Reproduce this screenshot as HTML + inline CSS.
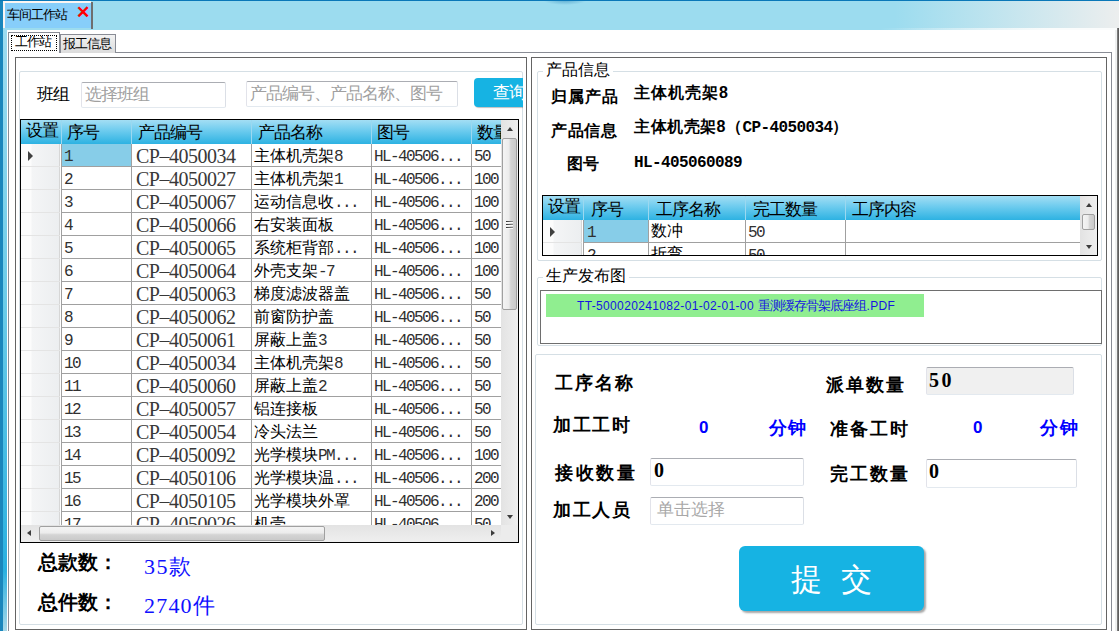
<!DOCTYPE html><html><head><meta charset="utf-8"><style>
*{margin:0;padding:0;box-sizing:border-box}
html,body{width:1119px;height:631px;overflow:hidden;background:#fff;font-family:"Liberation Sans",sans-serif;color:#000}
.ab{position:absolute}
.t{position:absolute;white-space:nowrap;line-height:1}
.a{font-family:"Liberation Mono",monospace;letter-spacing:-1.6px;color:#303030}
.hdr{background:linear-gradient(#a3def4 0%,#6ccbee 45%,#2db2e2 100%)}
.vl{position:absolute;width:1px;background:#a0a0a0}
.hl{position:absolute;height:1px;background:#a0a0a0}
.rh{position:absolute;background:linear-gradient(to right,#fcfcfc 0,#fcfcfc 10px,#f4f5f6 11px,#eceef0 100%);border-right:1px solid #d6d6d6}
.sb{position:absolute;background:#e8e8e8}
.thumbv{position:absolute;border:1px solid #a0a0a0;border-radius:2px;background:linear-gradient(to right,#f4f4f4 0%,#ececec 45%,#d4d4d4 60%,#cacaca 100%)}
.thumbh{position:absolute;border:1px solid #a0a0a0;border-radius:2px;background:linear-gradient(#f4f4f4 0%,#ececec 45%,#d4d4d4 60%,#cacaca 100%)}
.gb{position:absolute;border:1px solid #d5dfe5;border-radius:2px}
.frame{position:absolute;border:1px solid #646464}
.inp{position:absolute;border:1px solid;border-color:#abadb3 #dbdfe6 #e3e9ef #e2e3ea;border-radius:2px;background:#fff}
.b{font-weight:bold}
</style></head><body>
<div class="ab" style="left:0;top:0;width:1119px;height:30px;background:linear-gradient(to right,#9cdcef 0,#9cdcef 895px,#eceeee 1119px)"></div>
<div class="ab" style="left:540px;top:0;width:50px;height:7px;background:radial-gradient(ellipse 22px 5px at 25px 0,rgba(10,110,170,0.45),rgba(10,110,170,0) 100%)"></div>
<div class="ab" style="left:0;top:0;width:1119px;height:1px;background:#0a78b8"></div>
<div class="ab" style="left:3px;top:1px;width:88px;height:27px;background:#fbf5f2"></div>
<div class="ab" style="left:5px;top:3px;width:86px;height:25px;background:#87cefa"></div>
<div class="ab" style="left:91px;top:2px;width:2px;height:27px;background:#6e6e6e"></div>
<div class="t" style="left:7px;top:8px;font-size:13px;letter-spacing:-1px">车间工作站</div>
<div class="t" style="left:76px;top:4px;font-size:17px;color:#f00;font-weight:bold">✕</div>
<div class="ab" style="left:0;top:1px;width:3px;height:630px;background:#1a86bc"></div>
<div class="ab" style="left:3px;top:29px;width:4px;height:602px;background:linear-gradient(#9ddcf0 0%,#6ccce9 45%,#2ab0e0 90%,#a8d8e8 100%)"></div>
<div class="ab" style="left:1115px;top:30px;width:2px;height:601px;background:#eef0f0"></div>
<div class="ab" style="left:0;top:28px;width:1119px;height:2px;background:linear-gradient(to right,rgba(255,255,255,0) 0,rgba(255,255,255,0) 880px,rgba(250,252,252,1) 1050px)"></div>
<div class="ab" style="left:1117px;top:28px;width:2px;height:603px;background:linear-gradient(to right,#8a8a8a,#505050)"></div>
<div class="ab" style="left:8px;top:52px;width:1104px;height:600px;border:1px solid #898c95;background:#fff"></div>
<div class="ab" style="left:8px;top:32px;width:52px;height:21px;border:1px solid #898c95;border-bottom:none;background:#fff"></div>
<div class="ab" style="left:11px;top:35px;width:46px;height:16px;border:1px dotted #000"></div>
<div class="t" style="left:15px;top:35px;font-size:13px;letter-spacing:-1px">工作站</div>
<div class="ab" style="left:60px;top:34px;width:56px;height:19px;border:1px solid #898c95;border-bottom:none;background:linear-gradient(#f2f2f2,#dcdcdc)"></div>
<div class="t" style="left:63px;top:37px;font-size:13px;letter-spacing:-1px">报工信息</div>
<div class="frame" style="left:15px;top:57px;width:512px;height:573px"></div>
<div class="frame" style="left:531px;top:57px;width:576px;height:573px"></div>
<div class="gb" style="left:19px;top:71px;width:504px;height:554px"></div>
<div class="t" style="left:37px;top:86px;font-size:17px;letter-spacing:-1px">班组</div>
<div class="inp" style="left:81px;top:82px;width:145px;height:26px"></div>
<div class="t" style="left:85px;top:86px;font-size:17px;letter-spacing:-1px;color:#a0a0a0">选择班组</div>
<div class="inp" style="left:246px;top:81px;width:212px;height:26px"></div>
<div class="t" style="left:250px;top:85px;font-size:17px;letter-spacing:-1px;color:#a0a0a0">产品编号、产品名称、图号</div>
<div class="ab" style="left:474px;top:78px;width:49px;height:31px;overflow:hidden"><div class="ab" style="left:0;top:0;width:80px;height:29px;background:#16b3e3;border-radius:4px;box-shadow:1px 1px 1px rgba(0,0,0,0.25)"></div><div class="t" style="left:19px;top:6px;font-size:17px;letter-spacing:-1px;color:#fff">查询</div></div>
<div class="ab" style="left:20px;top:119px;width:499px;height:424px;border:1px solid #000;background:#fff;overflow:hidden">
<div class="ab hdr" style="left:0;top:0;width:480px;height:24px"></div>
<div class="ab" style="left:40px;top:0;width:1px;height:24px;background:#9bd8f0"></div>
<div class="ab" style="left:110px;top:0;width:1px;height:24px;background:#9bd8f0"></div>
<div class="ab" style="left:230px;top:0;width:1px;height:24px;background:#9bd8f0"></div>
<div class="ab" style="left:350px;top:0;width:1px;height:24px;background:#9bd8f0"></div>
<div class="ab" style="left:450px;top:0;width:1px;height:24px;background:#9bd8f0"></div>
<div class="t" style="left:5px;top:2px;font-size:17px;letter-spacing:-1px">设置</div>
<div class="t" style="left:46px;top:4px;font-size:17px;letter-spacing:-1px">序号</div>
<div class="t" style="left:117px;top:4px;font-size:17px;letter-spacing:-1px">产品编号</div>
<div class="t" style="left:237px;top:4px;font-size:17px;letter-spacing:-1px">产品名称</div>
<div class="t" style="left:356px;top:4px;font-size:17px;letter-spacing:-1px">图号</div>
<div class="t" style="left:456px;top:4px;font-size:17px;letter-spacing:-1px">数量</div>
<div class="rh" style="left:0;top:24px;width:39px;height:22px"></div>
<div class="ab" style="left:41px;top:24px;width:69px;height:22px;background:#87cde8"></div>
<div class="ab" style="left:7px;top:31px;width:0;height:0;border-left:5px solid #404040;border-top:5px solid transparent;border-bottom:5px solid transparent"></div>
<div class="t" style="left:43px;top:28px;font-size:16px"><span class="a">1</span></div>
<div class="t" style="left:115px;top:26px;font-size:20px;letter-spacing:-0.5px;color:#383838;font-family:'Liberation Serif',serif">CP–4050034</div>
<div class="t" style="left:233px;top:28px;font-size:16px">主体机壳架<span class="a">8</span></div>
<div class="t" style="left:353px;top:28px;font-size:16px"><span class="a">HL-40506...</span></div>
<div class="t" style="left:453px;top:28px;font-size:16px"><span class="a">50</span></div>
<div class="hl" style="left:0;top:46px;width:39px;background:#e4e4e4"></div>
<div class="hl" style="left:40px;top:46px;width:440px"></div>
<div class="rh" style="left:0;top:47px;width:39px;height:22px"></div>
<div class="t" style="left:43px;top:51px;font-size:16px"><span class="a">2</span></div>
<div class="t" style="left:115px;top:49px;font-size:20px;letter-spacing:-0.5px;color:#383838;font-family:'Liberation Serif',serif">CP–4050027</div>
<div class="t" style="left:233px;top:51px;font-size:16px">主体机壳架<span class="a">1</span></div>
<div class="t" style="left:353px;top:51px;font-size:16px"><span class="a">HL-40506...</span></div>
<div class="t" style="left:453px;top:51px;font-size:16px"><span class="a">100</span></div>
<div class="hl" style="left:0;top:69px;width:39px;background:#e4e4e4"></div>
<div class="hl" style="left:40px;top:69px;width:440px"></div>
<div class="rh" style="left:0;top:70px;width:39px;height:22px"></div>
<div class="t" style="left:43px;top:74px;font-size:16px"><span class="a">3</span></div>
<div class="t" style="left:115px;top:72px;font-size:20px;letter-spacing:-0.5px;color:#383838;font-family:'Liberation Serif',serif">CP–4050067</div>
<div class="t" style="left:233px;top:74px;font-size:16px">运动信息收<span class="a">...</span></div>
<div class="t" style="left:353px;top:74px;font-size:16px"><span class="a">HL-40506...</span></div>
<div class="t" style="left:453px;top:74px;font-size:16px"><span class="a">100</span></div>
<div class="hl" style="left:0;top:92px;width:39px;background:#e4e4e4"></div>
<div class="hl" style="left:40px;top:92px;width:440px"></div>
<div class="rh" style="left:0;top:93px;width:39px;height:22px"></div>
<div class="t" style="left:43px;top:97px;font-size:16px"><span class="a">4</span></div>
<div class="t" style="left:115px;top:95px;font-size:20px;letter-spacing:-0.5px;color:#383838;font-family:'Liberation Serif',serif">CP–4050066</div>
<div class="t" style="left:233px;top:97px;font-size:16px">右安装面板</div>
<div class="t" style="left:353px;top:97px;font-size:16px"><span class="a">HL-40506...</span></div>
<div class="t" style="left:453px;top:97px;font-size:16px"><span class="a">100</span></div>
<div class="hl" style="left:0;top:115px;width:39px;background:#e4e4e4"></div>
<div class="hl" style="left:40px;top:115px;width:440px"></div>
<div class="rh" style="left:0;top:116px;width:39px;height:22px"></div>
<div class="t" style="left:43px;top:120px;font-size:16px"><span class="a">5</span></div>
<div class="t" style="left:115px;top:118px;font-size:20px;letter-spacing:-0.5px;color:#383838;font-family:'Liberation Serif',serif">CP–4050065</div>
<div class="t" style="left:233px;top:120px;font-size:16px">系统柜背部<span class="a">...</span></div>
<div class="t" style="left:353px;top:120px;font-size:16px"><span class="a">HL-40506...</span></div>
<div class="t" style="left:453px;top:120px;font-size:16px"><span class="a">100</span></div>
<div class="hl" style="left:0;top:138px;width:39px;background:#e4e4e4"></div>
<div class="hl" style="left:40px;top:138px;width:440px"></div>
<div class="rh" style="left:0;top:139px;width:39px;height:22px"></div>
<div class="t" style="left:43px;top:143px;font-size:16px"><span class="a">6</span></div>
<div class="t" style="left:115px;top:141px;font-size:20px;letter-spacing:-0.5px;color:#383838;font-family:'Liberation Serif',serif">CP–4050064</div>
<div class="t" style="left:233px;top:143px;font-size:16px">外壳支架<span class="a">-7</span></div>
<div class="t" style="left:353px;top:143px;font-size:16px"><span class="a">HL-40506...</span></div>
<div class="t" style="left:453px;top:143px;font-size:16px"><span class="a">100</span></div>
<div class="hl" style="left:0;top:161px;width:39px;background:#e4e4e4"></div>
<div class="hl" style="left:40px;top:161px;width:440px"></div>
<div class="rh" style="left:0;top:162px;width:39px;height:22px"></div>
<div class="t" style="left:43px;top:166px;font-size:16px"><span class="a">7</span></div>
<div class="t" style="left:115px;top:164px;font-size:20px;letter-spacing:-0.5px;color:#383838;font-family:'Liberation Serif',serif">CP–4050063</div>
<div class="t" style="left:233px;top:166px;font-size:16px">梯度滤波器盖</div>
<div class="t" style="left:353px;top:166px;font-size:16px"><span class="a">HL-40506...</span></div>
<div class="t" style="left:453px;top:166px;font-size:16px"><span class="a">50</span></div>
<div class="hl" style="left:0;top:184px;width:39px;background:#e4e4e4"></div>
<div class="hl" style="left:40px;top:184px;width:440px"></div>
<div class="rh" style="left:0;top:185px;width:39px;height:22px"></div>
<div class="t" style="left:43px;top:189px;font-size:16px"><span class="a">8</span></div>
<div class="t" style="left:115px;top:187px;font-size:20px;letter-spacing:-0.5px;color:#383838;font-family:'Liberation Serif',serif">CP–4050062</div>
<div class="t" style="left:233px;top:189px;font-size:16px">前窗防护盖</div>
<div class="t" style="left:353px;top:189px;font-size:16px"><span class="a">HL-40506...</span></div>
<div class="t" style="left:453px;top:189px;font-size:16px"><span class="a">50</span></div>
<div class="hl" style="left:0;top:207px;width:39px;background:#e4e4e4"></div>
<div class="hl" style="left:40px;top:207px;width:440px"></div>
<div class="rh" style="left:0;top:208px;width:39px;height:22px"></div>
<div class="t" style="left:43px;top:212px;font-size:16px"><span class="a">9</span></div>
<div class="t" style="left:115px;top:210px;font-size:20px;letter-spacing:-0.5px;color:#383838;font-family:'Liberation Serif',serif">CP–4050061</div>
<div class="t" style="left:233px;top:212px;font-size:16px">屏蔽上盖<span class="a">3</span></div>
<div class="t" style="left:353px;top:212px;font-size:16px"><span class="a">HL-40506...</span></div>
<div class="t" style="left:453px;top:212px;font-size:16px"><span class="a">50</span></div>
<div class="hl" style="left:0;top:230px;width:39px;background:#e4e4e4"></div>
<div class="hl" style="left:40px;top:230px;width:440px"></div>
<div class="rh" style="left:0;top:231px;width:39px;height:22px"></div>
<div class="t" style="left:43px;top:235px;font-size:16px"><span class="a">10</span></div>
<div class="t" style="left:115px;top:233px;font-size:20px;letter-spacing:-0.5px;color:#383838;font-family:'Liberation Serif',serif">CP–4050034</div>
<div class="t" style="left:233px;top:235px;font-size:16px">主体机壳架<span class="a">8</span></div>
<div class="t" style="left:353px;top:235px;font-size:16px"><span class="a">HL-40506...</span></div>
<div class="t" style="left:453px;top:235px;font-size:16px"><span class="a">50</span></div>
<div class="hl" style="left:0;top:253px;width:39px;background:#e4e4e4"></div>
<div class="hl" style="left:40px;top:253px;width:440px"></div>
<div class="rh" style="left:0;top:254px;width:39px;height:22px"></div>
<div class="t" style="left:43px;top:258px;font-size:16px"><span class="a">11</span></div>
<div class="t" style="left:115px;top:256px;font-size:20px;letter-spacing:-0.5px;color:#383838;font-family:'Liberation Serif',serif">CP–4050060</div>
<div class="t" style="left:233px;top:258px;font-size:16px">屏蔽上盖<span class="a">2</span></div>
<div class="t" style="left:353px;top:258px;font-size:16px"><span class="a">HL-40506...</span></div>
<div class="t" style="left:453px;top:258px;font-size:16px"><span class="a">50</span></div>
<div class="hl" style="left:0;top:276px;width:39px;background:#e4e4e4"></div>
<div class="hl" style="left:40px;top:276px;width:440px"></div>
<div class="rh" style="left:0;top:277px;width:39px;height:22px"></div>
<div class="t" style="left:43px;top:281px;font-size:16px"><span class="a">12</span></div>
<div class="t" style="left:115px;top:279px;font-size:20px;letter-spacing:-0.5px;color:#383838;font-family:'Liberation Serif',serif">CP–4050057</div>
<div class="t" style="left:233px;top:281px;font-size:16px">铝连接板</div>
<div class="t" style="left:353px;top:281px;font-size:16px"><span class="a">HL-40506...</span></div>
<div class="t" style="left:453px;top:281px;font-size:16px"><span class="a">50</span></div>
<div class="hl" style="left:0;top:299px;width:39px;background:#e4e4e4"></div>
<div class="hl" style="left:40px;top:299px;width:440px"></div>
<div class="rh" style="left:0;top:300px;width:39px;height:22px"></div>
<div class="t" style="left:43px;top:304px;font-size:16px"><span class="a">13</span></div>
<div class="t" style="left:115px;top:302px;font-size:20px;letter-spacing:-0.5px;color:#383838;font-family:'Liberation Serif',serif">CP–4050054</div>
<div class="t" style="left:233px;top:304px;font-size:16px">冷头法兰</div>
<div class="t" style="left:353px;top:304px;font-size:16px"><span class="a">HL-40506...</span></div>
<div class="t" style="left:453px;top:304px;font-size:16px"><span class="a">50</span></div>
<div class="hl" style="left:0;top:322px;width:39px;background:#e4e4e4"></div>
<div class="hl" style="left:40px;top:322px;width:440px"></div>
<div class="rh" style="left:0;top:323px;width:39px;height:22px"></div>
<div class="t" style="left:43px;top:327px;font-size:16px"><span class="a">14</span></div>
<div class="t" style="left:115px;top:325px;font-size:20px;letter-spacing:-0.5px;color:#383838;font-family:'Liberation Serif',serif">CP–4050092</div>
<div class="t" style="left:233px;top:327px;font-size:16px">光学模块<span class="a">PM...</span></div>
<div class="t" style="left:353px;top:327px;font-size:16px"><span class="a">HL-40506...</span></div>
<div class="t" style="left:453px;top:327px;font-size:16px"><span class="a">100</span></div>
<div class="hl" style="left:0;top:345px;width:39px;background:#e4e4e4"></div>
<div class="hl" style="left:40px;top:345px;width:440px"></div>
<div class="rh" style="left:0;top:346px;width:39px;height:22px"></div>
<div class="t" style="left:43px;top:350px;font-size:16px"><span class="a">15</span></div>
<div class="t" style="left:115px;top:348px;font-size:20px;letter-spacing:-0.5px;color:#383838;font-family:'Liberation Serif',serif">CP–4050106</div>
<div class="t" style="left:233px;top:350px;font-size:16px">光学模块温<span class="a">...</span></div>
<div class="t" style="left:353px;top:350px;font-size:16px"><span class="a">HL-40506...</span></div>
<div class="t" style="left:453px;top:350px;font-size:16px"><span class="a">200</span></div>
<div class="hl" style="left:0;top:368px;width:39px;background:#e4e4e4"></div>
<div class="hl" style="left:40px;top:368px;width:440px"></div>
<div class="rh" style="left:0;top:369px;width:39px;height:22px"></div>
<div class="t" style="left:43px;top:373px;font-size:16px"><span class="a">16</span></div>
<div class="t" style="left:115px;top:371px;font-size:20px;letter-spacing:-0.5px;color:#383838;font-family:'Liberation Serif',serif">CP–4050105</div>
<div class="t" style="left:233px;top:373px;font-size:16px">光学模块外罩</div>
<div class="t" style="left:353px;top:373px;font-size:16px"><span class="a">HL-40506...</span></div>
<div class="t" style="left:453px;top:373px;font-size:16px"><span class="a">200</span></div>
<div class="hl" style="left:0;top:391px;width:39px;background:#e4e4e4"></div>
<div class="hl" style="left:40px;top:391px;width:440px"></div>
<div class="rh" style="left:0;top:392px;width:39px;height:22px"></div>
<div class="t" style="left:43px;top:396px;font-size:16px"><span class="a">17</span></div>
<div class="t" style="left:115px;top:394px;font-size:20px;letter-spacing:-0.5px;color:#383838;font-family:'Liberation Serif',serif">CP–4050026</div>
<div class="t" style="left:233px;top:396px;font-size:16px">机壳</div>
<div class="t" style="left:353px;top:396px;font-size:16px"><span class="a">HL-40506...</span></div>
<div class="t" style="left:453px;top:396px;font-size:16px"><span class="a">50</span></div>
<div class="hl" style="left:0;top:414px;width:39px;background:#e4e4e4"></div>
<div class="hl" style="left:40px;top:414px;width:440px"></div>
<div class="vl" style="left:40px;top:24px;height:400px"></div>
<div class="vl" style="left:110px;top:24px;height:400px"></div>
<div class="vl" style="left:230px;top:24px;height:400px"></div>
<div class="vl" style="left:350px;top:24px;height:400px"></div>
<div class="vl" style="left:450px;top:24px;height:400px"></div>
<div class="sb" style="left:480px;top:0;width:17px;height:405px;background:linear-gradient(to right,#e3e3e3,#efefef)"></div>
<div class="ab" style="left:486px;top:7px;width:0;height:0;border-left:3.5px solid transparent;border-right:3.5px solid transparent;border-bottom:4px solid #3c3c3c"></div>
<div class="thumbv" style="left:481px;top:18px;width:15px;height:172px"></div>
<div class="ab" style="left:485px;top:101px;width:7px;height:1px;background:linear-gradient(to right,#303030,#909090);box-shadow:0 1px 0 #fafafa"></div>
<div class="ab" style="left:485px;top:104px;width:7px;height:1px;background:linear-gradient(to right,#303030,#909090);box-shadow:0 1px 0 #fafafa"></div>
<div class="ab" style="left:485px;top:107px;width:7px;height:1px;background:linear-gradient(to right,#303030,#909090);box-shadow:0 1px 0 #fafafa"></div>
<div class="ab" style="left:486px;top:395px;width:0;height:0;border-left:3.5px solid transparent;border-right:3.5px solid transparent;border-top:4px solid #3c3c3c"></div>
<div class="sb" style="left:0;top:405px;width:480px;height:17px;background:linear-gradient(#e3e3e3,#efefef)"></div>
<div class="sb" style="left:480px;top:405px;width:17px;height:17px;background:#ececec"></div>
<div class="ab" style="left:6px;top:410px;width:0;height:0;border-top:3.5px solid transparent;border-bottom:3.5px solid transparent;border-right:4px solid #3c3c3c"></div>
<div class="thumbh" style="left:18px;top:406px;width:286px;height:15px"></div>
<div class="ab" style="left:470px;top:410px;width:0;height:0;border-top:3.5px solid transparent;border-bottom:3.5px solid transparent;border-left:4px solid #3c3c3c"></div>
</div>
<div class="t b" style="left:38px;top:552px;font-size:20px;font-family:'Liberation Serif',serif">总款数：</div>
<div class="t" style="left:144px;top:556px;font-size:22px;color:#1010ff;letter-spacing:1.5px;font-family:'Liberation Serif',serif">35款</div>
<div class="t b" style="left:38px;top:592px;font-size:20px;font-family:'Liberation Serif',serif">总件数：</div>
<div class="t" style="left:144px;top:595px;font-size:22px;color:#1010ff;letter-spacing:1.2px;font-family:'Liberation Serif',serif">2740件</div>
<div class="gb" style="left:537px;top:71px;width:565px;height:190px"></div>
<div class="ab" style="left:543px;top:64px;width:70px;height:14px;background:#fff"></div>
<div class="t" style="left:546px;top:62px;font-size:16px">产品信息</div>
<div class="t b" style="left:551px;top:89px;font-size:16px;letter-spacing:1px">归属产品</div>
<div class="t b" style="left:634px;top:85px;font-size:16px;letter-spacing:1px">主体机壳架8</div>
<div class="t b" style="left:551px;top:123px;font-size:16px;letter-spacing:0.7px">产品信息</div>
<div class="t b" style="left:634px;top:119px;font-size:16px;letter-spacing:0.5px">主体机壳架8（<span class="a" style="letter-spacing:-0.6px;color:#000">CP-4050034</span>）</div>
<div class="t b" style="left:567px;top:156px;font-size:16px">图号</div>
<div class="t b" style="left:634px;top:154px;font-size:16px"><span class="a" style="letter-spacing:-0.6px;color:#000">HL-405060089</span></div>
<div class="ab" style="left:542px;top:195px;width:556px;height:61px;border:1px solid #000;background:#fff;overflow:hidden">
<div class="ab hdr" style="left:0;top:0;width:537px;height:24px"></div>
<div class="ab" style="left:40px;top:0;width:1px;height:24px;background:#9bd8f0"></div>
<div class="ab" style="left:105px;top:0;width:1px;height:24px;background:#9bd8f0"></div>
<div class="ab" style="left:202px;top:0;width:1px;height:24px;background:#9bd8f0"></div>
<div class="ab" style="left:302px;top:0;width:1px;height:24px;background:#9bd8f0"></div>
<div class="t" style="left:5px;top:2px;font-size:17px;letter-spacing:-1px">设置</div>
<div class="t" style="left:48px;top:5px;font-size:17px;letter-spacing:-1px">序号</div>
<div class="t" style="left:113px;top:5px;font-size:17px;letter-spacing:-1px">工序名称</div>
<div class="t" style="left:210px;top:5px;font-size:17px;letter-spacing:-1px">完工数量</div>
<div class="t" style="left:309px;top:5px;font-size:17px;letter-spacing:-1px">工序内容</div>
<div class="rh" style="left:0;top:24px;width:39px;height:22px"></div>
<div class="ab" style="left:41px;top:24px;width:64px;height:22px;background:#87cde8"></div>
<div class="ab" style="left:7px;top:31px;width:0;height:0;border-left:5px solid #404040;border-top:5px solid transparent;border-bottom:5px solid transparent"></div>
<div class="t" style="left:44px;top:28px;font-size:16px"><span class="a">1</span></div>
<div class="t" style="left:108px;top:27px;font-size:16px">数冲</div>
<div class="t" style="left:205px;top:28px;font-size:16px"><span class="a">50</span></div>
<div class="hl" style="left:0;top:46px;width:39px;background:#e4e4e4"></div>
<div class="hl" style="left:40px;top:46px;width:497px"></div>
<div class="rh" style="left:0;top:47px;width:39px;height:22px"></div>
<div class="t" style="left:44px;top:51px;font-size:16px"><span class="a">2</span></div>
<div class="t" style="left:108px;top:50px;font-size:16px">折弯</div>
<div class="t" style="left:205px;top:51px;font-size:16px"><span class="a">50</span></div>
<div class="hl" style="left:0;top:69px;width:39px;background:#e4e4e4"></div>
<div class="hl" style="left:40px;top:69px;width:497px"></div>
<div class="vl" style="left:40px;top:24px;height:40px"></div>
<div class="vl" style="left:105px;top:24px;height:40px"></div>
<div class="vl" style="left:202px;top:24px;height:40px"></div>
<div class="vl" style="left:302px;top:24px;height:40px"></div>
<div class="sb" style="left:537px;top:0;width:17px;height:60px;background:linear-gradient(to right,#e3e3e3,#efefef)"></div>
<div class="ab" style="left:543px;top:7px;width:0;height:0;border-left:3.5px solid transparent;border-right:3.5px solid transparent;border-bottom:4px solid #3c3c3c"></div>
<div class="thumbv" style="left:539px;top:18px;width:13px;height:16px"></div>
<div class="ab" style="left:543px;top:49px;width:0;height:0;border-left:3.5px solid transparent;border-right:3.5px solid transparent;border-top:4px solid #3c3c3c"></div>
</div>
<div class="gb" style="left:537px;top:277px;width:565px;height:69px"></div>
<div class="ab" style="left:543px;top:270px;width:86px;height:14px;background:#fff"></div>
<div class="t" style="left:546px;top:268px;font-size:16px">生产发布图</div>
<div class="ab" style="left:540px;top:290px;width:562px;height:54px;border:1px solid #6e6e6e"></div>
<div class="ab" style="left:546px;top:294px;width:378px;height:23px;background:#90ee90"></div>
<div class="t" style="left:577px;top:299px;font-size:12px;letter-spacing:0.35px;color:#1515e0">TT-500020241082-01-02-01-00 <span style="font-size:13px;letter-spacing:-0.9px">重测缓存骨架底座组</span>.PDF</div>
<div class="gb" style="left:535px;top:354px;width:567px;height:271px"></div>
<div class="t b" style="left:555px;top:374px;font-size:18px;letter-spacing:2px">工序名称</div>
<div class="t b" style="left:826px;top:376px;font-size:18px;letter-spacing:2px">派单数量</div>
<div class="inp" style="left:926px;top:367px;width:148px;height:28px;background:#f0f0f0"></div>
<div class="t b" style="left:929px;top:370px;font-size:20px;letter-spacing:2.5px;font-family:'Liberation Serif',serif">50</div>
<div class="t b" style="left:553px;top:416px;font-size:18px;letter-spacing:1.6px">加工工时</div>
<div class="t b" style="left:699px;top:419px;font-size:17px;color:#0000ff">0</div>
<div class="t b" style="left:769px;top:419px;font-size:18px;color:#0000ff;letter-spacing:1px">分钟</div>
<div class="t b" style="left:830px;top:420px;font-size:18px;letter-spacing:2px">准备工时</div>
<div class="t b" style="left:973px;top:419px;font-size:17px;color:#0000ff">0</div>
<div class="t b" style="left:1040px;top:419px;font-size:18px;color:#0000ff;letter-spacing:2px">分钟</div>
<div class="t b" style="left:555px;top:464px;font-size:18px;letter-spacing:2.6px">接收数量</div>
<div class="inp" style="left:650px;top:458px;width:154px;height:28px"></div>
<div class="t b" style="left:654px;top:460px;font-size:20px;font-family:'Liberation Serif',serif">0</div>
<div class="t b" style="left:830px;top:465px;font-size:18px;letter-spacing:2px">完工数量</div>
<div class="inp" style="left:926px;top:459px;width:151px;height:29px"></div>
<div class="t b" style="left:929px;top:461px;font-size:20px;font-family:'Liberation Serif',serif">0</div>
<div class="t b" style="left:553px;top:501px;font-size:18px;letter-spacing:1.6px">加工人员</div>
<div class="inp" style="left:650px;top:497px;width:154px;height:28px"></div>
<div class="t" style="left:657px;top:501px;font-size:17px;color:#a8a8a8">单击选择</div>
<div class="ab" style="left:739px;top:546px;width:185px;height:65px;background:#16b3e3;border-radius:6px;box-shadow:2px 2px 2px rgba(0,0,0,0.35)"></div>
<div class="t" style="left:791px;top:564px;font-size:31px;color:#fff;letter-spacing:19px">提交</div>
</body></html>
